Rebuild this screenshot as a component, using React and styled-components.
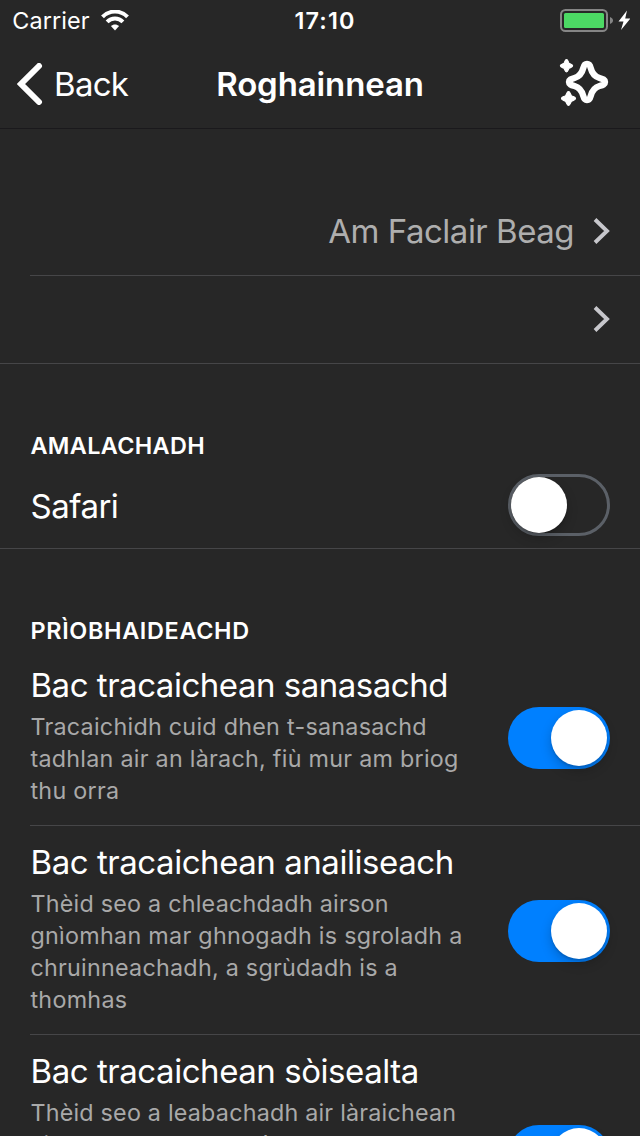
import React from 'react';
import styled, { createGlobalStyle } from 'styled-components';

const Global = createGlobalStyle`
  * { box-sizing: border-box; }
  html, body { margin: 0; background: #272727; }
  body { font-family: Inter, "Liberation Sans", sans-serif; overflow: hidden; }
`;

const Screen = styled.div`
  width: 640px;
  height: 1136px;
  overflow: hidden;
  background: #272727;
  color: #fff;
`;

const StatusBar = styled.div`
  height: 40px;
  display: grid;
  grid-template-columns: 1fr auto 1fr;
  align-items: center;
  padding: 2px 10px 0 12px;
`;

const Carrier = styled.div`
  display: flex;
  align-items: center;
  gap: 11px;
`;

const Label = styled.span`
  display: block;
  white-space: nowrap;
  width: max-content;
  font-size: ${p => p.$size}px;
  line-height: ${p => p.$line}px;
  font-weight: ${p => p.$weight || 400};
  letter-spacing: ${p => p.$track || 0}px;
  color: ${p => p.$color || '#fff'};
  padding-left: ${p => p.$indent || 0}px;
`;

const Power = styled.div`
  display: flex;
  justify-content: flex-end;
`;

const NavBar = styled.header`
  height: 89px;
  display: grid;
  grid-template-columns: 1fr auto 1fr;
  align-items: center;
  border-bottom: 1px solid #1a191c;
  padding: 0 31px 0 17px;
`;

const BackButton = styled.div`
  display: flex;
  align-items: center;
  gap: 11px;
`;

const NavAction = styled.div`
  display: flex;
  justify-content: flex-end;
  padding-bottom: 2px;
`;

const LinkGroup = styled.section`
  padding-top: 59px;
  border-bottom: 1px solid #464648;
`;

const LinkRow = styled.div`
  height: ${p => p.$height}px;
  margin-left: 30px;
  padding: 0 30px 1px 0;
  display: flex;
  align-items: center;
  justify-content: flex-end;
  gap: 19px;
  border-bottom: ${p => (p.$divided ? '1px solid #464648' : 'none')};
`;

const SectionTitle = styled.h2`
  margin: 0;
  padding: 67px 30px 0 30.5px;
  font-size: 23.4px;
  line-height: 30px;
  font-weight: 600;
  letter-spacing: ${p => p.$track}px;
`;

const SafariRow = styled.div`
  height: 88px;
  padding: 0 30px;
  border-bottom: 1px solid #464648;
  display: flex;
  align-items: center;
  justify-content: space-between;
`;

const SafariName = styled.div`
  padding-top: 2px;
`;

const SettingRow = styled.div`
  height: ${p => p.$height}px;
  margin-left: 30px;
  padding: ${p => p.$top}px 30px 0 0;
  display: flex;
  justify-content: space-between;
  border-bottom: 1px solid #464648;
`;

const Copy = styled.div`
  display: flex;
  flex-direction: column;
`;

const Description = styled.div`
  margin-top: 5px;
`;

const Track = styled.div`
  flex: none;
  width: 102px;
  height: 62px;
  border-radius: 31px;
  padding: ${p => (p.$on ? 3 : 0)}px;
  margin-top: ${p => p.$offset || 0}px;
  display: flex;
  align-items: center;
  justify-content: ${p => (p.$on ? 'flex-end' : 'flex-start')};
  border: ${p => (p.$on ? 'none' : '3px solid #5b6067')};
  background: ${p => (p.$on ? '#0080ff' : 'transparent')};
`;

const Knob = styled.div`
  width: 56px;
  height: 56px;
  border-radius: 50%;
  background: #fff;
  box-shadow: 0 5px 12px rgba(0, 0, 0, 0.2), 0 2px 2px rgba(0, 0, 0, 0.12);
`;

const Toggle = ({ on, offset }) => (
  <Track $on={on} $offset={offset}><Knob /></Track>
);

const Wifi = () => (
  <svg width="28" height="22" viewBox="0 0 28 22" fill="none" stroke="#fff" strokeWidth="4">
    <path d="M1.5 6.8C8.4-.2 19.6-.2 26.5 6.8" />
    <path d="M6.1 11.9C10.5 7.5 17.5 7.5 21.9 11.9" />
    <path d="M9.9 16C12.1 13.9 15.9 13.9 18.1 16L14 20.4Z" fill="#fff" stroke="none" />
  </svg>
);

const Battery = () => (
  <svg width="70" height="24" viewBox="0 0 70 24">
    <rect x="1" y="1" width="46" height="21" rx="4.5" fill="none" stroke="#858585" strokeWidth="2" />
    <rect x="4" y="4" width="40" height="15" rx="1.5" fill="#4cd964" />
    <path d="M50 8C54 9.5 54 13.5 50 15Z" fill="#858585" />
    <path d="M67 1.5L58.5 12.5H63.5L61 21L70.5 9.5H65.2Z" fill="#fff" />
  </svg>
);

const Sparkles = () => (
  <svg width="50" height="48" viewBox="0 0 50 48">
    <path d="M28 5C30.3 5 31.1 6.7 31.7 9C33.1 14.6 35.2 17.4 40.5 19C44 20 46 20.7 46 23C46 25.3 44 26 40.5 27C35.2 28.6 33.1 31.4 31.7 37C31.1 39.3 30.3 41 28 41C25.7 41 24.9 39.3 24.3 37C22.9 31.4 20.8 28.6 15.5 27C12 26 10 25.3 10 23C10 20.7 12 20 15.5 19C20.8 17.4 22.9 14.6 24.3 9C24.9 6.7 25.7 5 28 5Z" fill="none" stroke="#fff" strokeWidth="6.4" strokeLinejoin="round" />
    <g fill="#fff" stroke="#fff" strokeWidth="1.2" strokeLinejoin="round">
      <path d="M7.5 .6C9 .6 9.1 3 10 4.2C11.2 5.1 13.6 5.2 13.6 6.8C13.6 8.4 11.2 8.4 10 9.3C9.1 10.6 9 13 7.5 13C6 13 5.9 10.6 5 9.3C3.8 8.4 1.4 8.4 1.4 6.8C1.4 5.2 3.8 5.1 5 4.2C5.9 3 6 .6 7.5 .6Z" />
      <path d="M9.5 32.6C11.2 32.6 11.2 35.3 12.4 36.6C13.7 37.8 16.5 37.8 16.5 39.5C16.5 41.2 13.7 41.2 12.4 42.4C11.2 43.7 11.2 46.4 9.5 46.4C7.8 46.4 7.8 43.7 6.6 42.4C5.3 41.2 2.5 41.2 2.5 39.5C2.5 37.8 5.3 37.8 6.6 36.6C7.8 35.3 7.8 32.6 9.5 32.6Z" />
    </g>
  </svg>
);

const Disclosure = () => (
  <svg width="17" height="26" viewBox="0 0 17 26" fill="none">
    <path d="M2 1.5L14 13L2 24.5" stroke="#c7c7cc" strokeWidth="3.9" />
  </svg>
);

// The last description line is clipped at the screen's bottom edge, so only
// the tops of its tallest letters show; its wording is placeholder copy.
const settings = [
  {
    title: 'Bac tracaichean sanasachd', track: -0.48, height: 180, top: 18, toggle: 43,
    lines: [['Tracaichidh cuid dhen t-sanasachd', 0.27], ['tadhlan air an làrach, fiù mur am briog', 0.27], ['thu orra', 0.3]],
  },
  {
    title: 'Bac tracaichean anailiseach', track: -0.45, height: 209, top: 15, toggle: 59,
    lines: [['Thèid seo a chleachdadh airson', 0.24], ['gnìomhan mar ghnogadh is sgroladh a', 0.3], ['chruinneachadh, a sgrùdadh is a', 0.26], ['thomhas', 0.3]],
  },
  {
    title: 'Bac tracaichean sòisealta', track: -0.45, height: 209, top: 15, toggle: 75,
    lines: [['Thèid seo a leabachadh air làraichean', 0.22], ['airson nan call a call ùr an beag', 0]],
  },
];

export default function App() {
  return (
    <Screen>
      <Global />
      <StatusBar>
        <Carrier><Label $size={23.4} $line={30} $track={0.1} $indent={0.3}>Carrier</Label><Wifi /></Carrier>
        <Label $size={23.4} $line={30} $weight={600} $track={1.1} $indent={8}>17:10</Label>
        <Power><Battery /></Power>
      </StatusBar>
      <NavBar>
        <BackButton>
          <svg width="26" height="42" viewBox="0 0 26 42" fill="none">
            <path d="M22 3L4 21L22 39" stroke="#fff" strokeWidth="6" strokeLinecap="round" />
          </svg>
          <Label $size={33} $line={42} $track={-0.7}>Back</Label>
        </BackButton>
        <Label $size={33} $line={42} $weight={600} $track={-0.12} $indent={14}>Roghainnean</Label>
        <NavAction><Sparkles /></NavAction>
      </NavBar>
      <LinkGroup>
        <LinkRow $height={88} $divided>
          <Label $size={33} $line={42} $track={-0.5} $color="#aeaeae">Am Faclair Beag</Label><Disclosure />
        </LinkRow>
        <LinkRow $height={87}><Disclosure /></LinkRow>
      </LinkGroup>
      <SectionTitle $track={0.35}>AMALACHADH</SectionTitle>
      <SafariRow>
        <SafariName><Label $size={33} $line={42} $track={-0.5} $indent={0.5}>Safari</Label></SafariName>
        <Toggle />
      </SafariRow>
      <SectionTitle $track={0.67}>PRÌOBHAIDEACHD</SectionTitle>
      {settings.map(s => (
        <SettingRow key={s.title} $height={s.height} $top={s.top}>
          <Copy>
            <Label $size={33} $line={42} $track={s.track} $indent={0.5}>{s.title}</Label>
            <Description>
              {s.lines.map(([text, track]) => (
                <Label key={text} $size={23.3} $line={32} $track={track} $color="#a9a9a9" $indent={0.4}>{text}</Label>
              ))}
            </Description>
          </Copy>
          <Toggle on offset={s.toggle} />
        </SettingRow>
      ))}
    </Screen>
  );
}
